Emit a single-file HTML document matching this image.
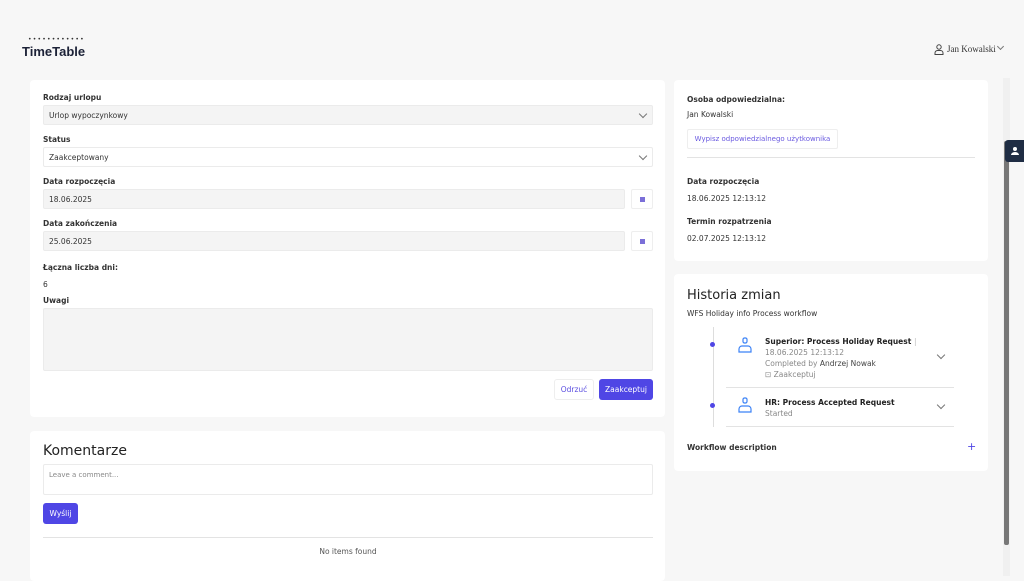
<!DOCTYPE html>
<html><head><meta charset="utf-8"><style>
*{box-sizing:border-box;margin:0;padding:0}
body{width:1024px;height:576px;overflow:hidden;background:#f7f7f7;font-family:"DejaVu Sans","Liberation Sans",sans-serif;color:#222;position:relative;font-size:7.5px}
div{white-space:nowrap}
.a{position:absolute}
.card{position:absolute;background:#fff;border-radius:4px}
.lbl{position:absolute;font-size:7.5px;font-weight:bold;color:#333}
.inp{position:absolute;background:#f4f4f4;border:1px solid #ebebeb;border-radius:2px;font-size:7.5px;color:#333;padding:0 5px;display:flex;align-items:center}
.txt{position:absolute;font-size:7.5px;color:#333}
.chev{position:absolute;width:6px;height:6px;border-right:1px solid #777;border-bottom:1px solid #777;transform:rotate(45deg)}
.cal{position:absolute;width:22px;height:20px;background:#fff;border:1px solid #eee;border-radius:2px}
.cal:after{content:"";position:absolute;left:8px;top:7px;width:5px;height:5px;background:#7b6fd8}
</style></head><body>
<div class="a" style="left:28px;top:38px;font-size:6px;letter-spacing:1.2px;color:#333;line-height:4px">••••••••••••</div>
<div class="a" style="left:22px;top:44px;font-size:13px;font-weight:bold;color:#1c2237;font-family:'Liberation Sans',sans-serif">TimeTable</div>
<svg class="a" style="left:934px;top:44px" width="10" height="11" viewBox="0 0 10 11"><circle cx="5" cy="3" r="2.2" fill="none" stroke="#444" stroke-width="1"/><path d="M1 10.5v-1.5a2.5 2.5 0 0 1 2.5-2.5h3A2.5 2.5 0 0 1 9 9v1.5z" fill="none" stroke="#444" stroke-width="1"/></svg>
<div class="a" style="left:947px;top:44px;font-size:9px;font-family:'Liberation Serif',serif;color:#333">Jan Kowalski</div>
<div class="chev" style="left:998px;top:44px;width:5px;height:5px"></div>

<div class="card" style="left:30px;top:80px;width:635px;height:337px"></div>
<div class="lbl" style="left:43px;top:93px">Rodzaj urlopu</div>
<div class="inp" style="left:43px;top:105px;width:610px;height:20px">Urlop wypoczynkowy</div>
<div class="chev" style="left:640px;top:111px"></div>
<div class="lbl" style="left:43px;top:135px">Status</div>
<div class="inp" style="left:43px;top:147px;width:610px;height:20px;background:#fff">Zaakceptowany</div>
<div class="chev" style="left:640px;top:153px"></div>
<div class="lbl" style="left:43px;top:177px">Data rozpoczęcia</div>
<div class="inp" style="left:43px;top:189px;width:582px;height:20px">18.06.2025</div>
<div class="cal" style="left:631px;top:189px"></div>
<div class="lbl" style="left:43px;top:219px">Data zakończenia</div>
<div class="inp" style="left:43px;top:231px;width:582px;height:20px">25.06.2025</div>
<div class="cal" style="left:631px;top:231px"></div>
<div class="lbl" style="left:43px;top:263px">Łączna liczba dni:</div>
<div class="txt" style="left:43px;top:280px">6</div>
<div class="lbl" style="left:43px;top:296px">Uwagi</div>
<div class="inp" style="left:43px;top:308px;width:610px;height:63px"></div>
<div class="a" style="left:554px;top:379px;width:40px;height:21px;border:1px solid #eee;border-radius:3px;color:#5b4ee0;font-size:7.5px;display:flex;align-items:center;justify-content:center">Odrzuć</div>
<div class="a" style="left:599px;top:379px;width:54px;height:21px;background:#4f46e5;border-radius:3px;color:#fff;font-size:7.5px;display:flex;align-items:center;justify-content:center">Zaakceptuj</div>

<div class="card" style="left:30px;top:431px;width:635px;height:150px"></div>
<div class="a" style="left:43px;top:443px;font-size:14px;color:#222">Komentarze</div>
<div class="inp" style="left:43px;top:464px;width:610px;height:31px;background:#fff;align-items:flex-start;padding-top:6px;color:#888;font-size:7px">Leave a comment...</div>
<div class="a" style="left:43px;top:503px;width:35px;height:21px;background:#4f46e5;border-radius:3px;color:#fff;font-size:7.5px;display:flex;align-items:center;justify-content:center">Wyślij</div>
<div class="a" style="left:43px;top:537px;width:610px;height:1px;background:#e3e3e3"></div>
<div class="a" style="left:43px;top:547px;width:610px;text-align:center;font-size:7.5px;color:#555">No items found</div>

<div class="card" style="left:674px;top:80px;width:314px;height:181px"></div>
<div class="lbl" style="left:687px;top:95px">Osoba odpowiedzialna:</div>
<div class="txt" style="left:687px;top:110px">Jan Kowalski</div>
<div class="a" style="left:687px;top:129px;width:151px;height:20px;border:1px solid #eee;border-radius:2px;color:#6a5ae0;font-size:7px;display:flex;align-items:center;justify-content:center">Wypisz odpowiedzialnego użytkownika</div>
<div class="a" style="left:687px;top:157px;width:288px;height:1px;background:#e3e3e3"></div>
<div class="lbl" style="left:687px;top:177px">Data rozpoczęcia</div>
<div class="txt" style="left:687px;top:194px">18.06.2025 12:13:12</div>
<div class="lbl" style="left:687px;top:217px">Termin rozpatrzenia</div>
<div class="txt" style="left:687px;top:234px">02.07.2025 12:13:12</div>

<div class="card" style="left:674px;top:274px;width:314px;height:197px"></div>
<div class="a" style="left:687px;top:288px;font-size:13px;color:#222">Historia zmian</div>
<div class="txt" style="left:687px;top:309px">WFS Holiday info Process workflow</div>
<div class="a" style="left:713px;top:327px;width:1px;height:100px;background:#ddd"></div>
<div class="a" style="left:710px;top:342px;width:5px;height:5px;border-radius:50%;background:#4f46e5"></div>
<div class="a" style="left:710px;top:403px;width:5px;height:5px;border-radius:50%;background:#4f46e5"></div>
<svg class="a" style="left:738px;top:337px" width="14" height="16" viewBox="0 0 14 16"><rect x="5" y="1" width="4" height="5" rx="1.5" fill="none" stroke="#3b82f6" stroke-width="1.2"/><path d="M1 15v-3a3 3 0 0 1 3-3h6a3 3 0 0 1 3 3v3z" fill="none" stroke="#3b82f6" stroke-width="1.2"/></svg>
<svg class="a" style="left:738px;top:397px" width="14" height="16" viewBox="0 0 14 16"><rect x="5" y="1" width="4" height="5" rx="1.5" fill="none" stroke="#3b82f6" stroke-width="1.2"/><path d="M1 15v-3a3 3 0 0 1 3-3h6a3 3 0 0 1 3 3v3z" fill="none" stroke="#3b82f6" stroke-width="1.2"/></svg>
<div class="lbl" style="left:765px;top:337px;color:#222">Superior: Process Holiday Request <span style="font-weight:normal;color:#bbb">|</span></div>
<div class="txt" style="left:765px;top:348px;color:#888">18.06.2025 12:13:12</div>
<div class="txt" style="left:765px;top:359px;color:#888">Completed by <span style="color:#444">Andrzej Nowak</span></div>
<div class="txt" style="left:765px;top:370px;color:#888">⊡ Zaakceptuj</div>
<div class="chev" style="left:938px;top:352px"></div>
<div class="a" style="left:726px;top:387px;width:228px;height:1px;background:#e3e3e3"></div>
<div class="lbl" style="left:765px;top:398px;color:#222">HR: Process Accepted Request</div>
<div class="txt" style="left:765px;top:409px;color:#888">Started</div>
<div class="chev" style="left:938px;top:402px"></div>
<div class="a" style="left:726px;top:426px;width:228px;height:1px;background:#e3e3e3"></div>
<div class="lbl" style="left:687px;top:443px">Workflow description</div>
<div class="a" style="left:967px;top:440px;font-size:11px;color:#4f46e5">+</div>

<div class="a" style="left:1003px;top:78px;width:7px;height:498px;background:#f0f0f0"></div>
<div class="a" style="left:1004px;top:141px;width:5px;height:404px;background:#777;border-radius:2px"></div>
<div class="a" style="left:1005px;top:140px;width:19px;height:22px;background:#1f2d44;border-radius:3px 0 0 3px"></div>
<svg class="a" style="left:1011px;top:146px" width="10" height="10" viewBox="0 0 10 10"><circle cx="4" cy="3" r="2" fill="#fff"/><path d="M0 9a4 3 0 0 1 8 0z" fill="#fff"/></svg>
</body></html>
